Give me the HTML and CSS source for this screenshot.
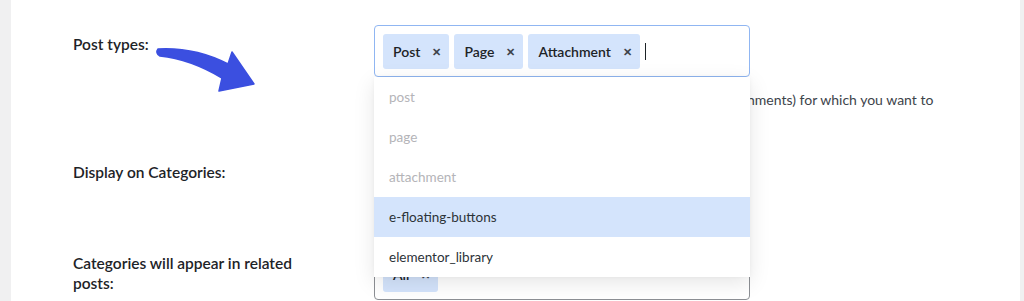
FILE: index.html
```html
<!DOCTYPE html>
<html lang="en">
<head>
    <meta charset="UTF-8">
    <meta name="viewport" content="width=device-width, initial-scale=1.0">
    <title>Related Posts Settings</title>
    <link rel="stylesheet" href="styles.css">
</head>
<body>
    <div class="page">
        <div class="form">
            <!-- Post types -->
            <div class="form-row">
                <div class="label">
                    Post types:
                    <svg class="arrow" width="110" height="50" viewBox="0 0 110 50">
                        <path d="M8 4 Q45 2 78 19 L82 7 L104 39 L69 46 L72 33 Q40 14 10 11 Q5 8 8 4 Z" fill="#3b4fe0" stroke="#3b4fe0" stroke-width="1.5" stroke-linejoin="round"/>
                    </svg>
                </div>
                <div class="field">
                    <div class="select focused">
                        <span class="chip">Post <span class="chip-x">&#x2715;</span></span>
                        <span class="chip">Page <span class="chip-x">&#x2715;</span></span>
                        <span class="chip">Attachment <span class="chip-x">&#x2715;</span></span>
                        <span class="caret"></span>
                    </div>

                    <!-- Open dropdown -->
                    <ul class="dropdown">
                        <li class="disabled">post</li>
                        <li class="disabled">page</li>
                        <li class="disabled">attachment</li>
                        <li class="active">e-floating-buttons</li>
                        <li>elementor_library</li>
                    </ul>

                    <p class="hint">Select the post types (for example posts, pages, or even attachments) for which you want to show related posts.</p>
                </div>
            </div>

            <!-- Display on categories -->
            <div class="form-row row-cats">
                <div class="label">Display on Categories:</div>
                <div class="field">
                    <div class="select">
                        <span class="chip">All <span class="chip-x">&#x2715;</span></span>
                    </div>
                </div>
            </div>

            <!-- Categories in related posts -->
            <div class="form-row">
                <div class="label label-two">Categories will appear in related posts:</div>
                <div class="field">
                    <div class="select plain">
                        <span class="chip">All <span class="chip-x">&#x2715;</span></span>
                    </div>
                </div>
            </div>
        </div>
    </div>
</body>
</html>
```

FILE: styles.css
```css
body {
    margin: 0;
    background: #f0f0f1;
    font-family: Lato, "Open Sans", sans-serif;
    color: #1d2327;
    height: 301px;
    overflow: hidden;
}
.page {
    background: #fff;
    margin: 0 4px 0 11px;
    height: 301px;
    padding: 25px 0 0 62px;
    box-sizing: border-box;
}
.form-row {
    display: grid;
    grid-template-columns: 301px 1fr;
    margin-bottom: 23px;
}
.row-cats {
    margin-bottom: 43px;
}
.label {
    position: relative;
    font-size: 15.5px;
    font-weight: 600;
    line-height: 20px;
    padding-top: 9px;
    padding-right: 60px;
}
.label-two {
    padding-top: 5px;
}
.arrow {
    position: absolute;
    left: 77px;
    top: 20px;
}
.field {
    position: relative;
}
.select {
    width: 376px;
    box-sizing: border-box;
    min-height: 52px;
    border: 1px solid #8c8f94;
    border-radius: 4px;
    padding: 8px 8px 7px 8px;
    display: flex;
    align-items: center;
    gap: 5px;
}
.select.focused {
    border-color: #90b6f2;
}
.chip {
    display: inline-flex;
    align-items: center;
    height: 35px;
    padding: 0 8px 0 10px;
    background: #d4e4fc;
    border-radius: 3px;
    font-size: 14px;
    font-weight: 600;
    color: #1d2327;
}
.chip-x {
    font-size: 11px;
    font-weight: 700;
    margin-left: 12px;
    color: #3c434a;
}
.caret {
    width: 1px;
    height: 17px;
    background: #1d2327;
}
.dropdown {
    position: absolute;
    top: 52px;
    left: 0;
    width: 376px;
    margin: 0;
    padding: 0;
    list-style: none;
    background: #fff;
    box-shadow: 0 6px 20px rgba(0, 0, 0, 0.1), 0 0 5px rgba(0, 0, 0, 0.04);
    z-index: 5;
}
.dropdown li {
    height: 40px;
    line-height: 40px;
    padding: 0 15px;
    font-size: 13.5px;
    color: #2c3338;
}
.dropdown li.disabled {
    color: #b4b4b8;
}
.dropdown li.active {
    background: #d4e4fc;
}
.hint {
    margin: 13px 0 0;
    max-width: 565px;
    font-size: 14px;
    line-height: 20px;
    color: #3c434a;
}
```
